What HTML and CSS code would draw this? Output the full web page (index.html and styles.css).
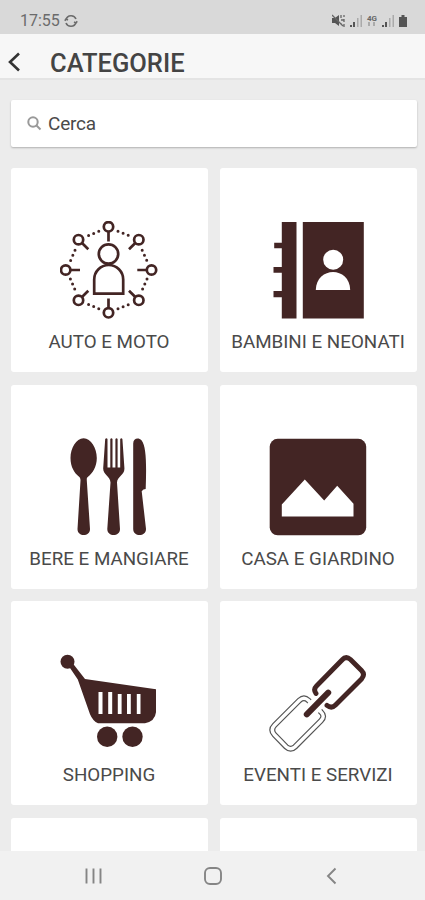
FILE: index.html
```html
<!DOCTYPE html>
<html lang="it">
<head>
<meta charset="utf-8">
<meta name="viewport" content="width=device-width, initial-scale=1">
<title>Categorie</title>
<link rel="stylesheet" href="styles.css">
</head>
<body>
<div class="status">
    <span class="time">17:55</span>
    <svg class="sync" width="14" height="14" viewBox="0 0 14 14"><path d="M2 5.500A5.300 5.300 0 0 1 12 5M12 8.500A5.300 5.300 0 0 1 2 9M0.800 6.700L2 5l2 1M13.200 7.300L12 9l-2-1"/></svg>
    <svg class="signals" width="76" height="14" viewBox="0 0 76 14">
        <path class="on" d="M0 4h3l4-3v11L3 9H0z"/>
        <path class="line" d="M0 1l11 11M9 1v3M12 1v2M9 6h3M12 5v3M9 9v2M12 10v3"/>
        <path class="on" d="M18 11h2v2h-2zM21 8h2v5h-2z"/>
        <path class="off" d="M25 4h1.500v9H25zM28.500 1H30v12h-1.500z"/>
        <text x="35" y="6.500">4G</text>
        <path class="off" d="M36 8h2v4h-2zM41 8h2v4h-2z"/>
        <path class="on" d="M50 11h2v2h-2zM53 8h2v5h-2z"/>
        <path class="off" d="M57 4h1.500v9H57zM60.500 1H62v12h-1.500z"/>
        <path class="on" d="M67 3h2.500V1h3v2H75v10h-8z"/>
    </svg>
</div>

<div class="header">
    <svg class="back" width="13" height="20" viewBox="0 0 13 20"><path d="M11 1.500L2 10l9 8.500"/></svg>
    <h1>CATEGORIE</h1>
</div>

<div class="content">
    <div class="search">
        <svg width="15" height="15" viewBox="0 0 15 15"><circle cx="6" cy="6" r="4.700"/><path d="M9.500 9.500l4 4"/></svg>
        <span>Cerca</span>
    </div>

    <div class="grid">
        <div class="card">
            <svg class="icon line-icon" viewBox="0 0 98 98">
                <path d="M48.500 10.500v10M48.500 87V77.500M10.400 49H20M86.800 49h-9.500M22 22l6.300 6.300M75.300 22L69 28.300M22 76l6.300-6.300M75.300 76L69 69.700"/>
                <circle cx="48.500" cy="5.800" r="4.700"/><circle cx="78.800" cy="18.700" r="4.700"/>
                <circle cx="91.500" cy="49" r="4.700"/><circle cx="78.800" cy="79.300" r="4.700"/>
                <circle cx="48.500" cy="91.800" r="4.700"/><circle cx="18.500" cy="79.300" r="4.700"/>
                <circle cx="5.700" cy="49" r="4.700"/><circle cx="18.500" cy="18.700" r="4.700"/>
                <path class="dots" d="M28.600 14.500l10.400-4.300M58 10.200l10.600 4.300M28.600 83.500l10.400 4.300M58 87.800l10.600-4.300M15 29.300L10.400 40M82.200 29.300L87 40M10.400 58L15 68.800M87 58l-4.700 10.800"/>
                <circle cx="48.500" cy="33" r="9.700"/>
                <path d="M34.200 72.700V58.500a14.500 14.500 0 0 1 29 0v14.200z"/>
            </svg>
            <p>AUTO E MOTO</p>
        </div>
        <div class="card">
            <svg class="icon" viewBox="0 0 98 98">
                <path d="M12.800 1h14.700v96.500H12.800V76.300H4.500V70h8.300V51.700H4.500V46h8.300V27.300H5.200v-5.600h7.600zM33.800 1h61v96.500h-61z"/>
                <circle class="white" cx="64.200" cy="38.700" r="10"/>
                <path class="white" d="M46.800 69c.5-24 34-24 34.400 0z"/>
            </svg>
            <p>BAMBINI E NEONATI</p>
        </div>
        <div class="card">
            <svg class="icon" viewBox="0 0 98 98">
                <path d="M23.600.2C31 .2 36.800 10 36.800 20c0 9-4.500 15.500-8.500 18.500-1.500 1-1.600 2-1.500 4L30 91c0 8-12.500 8-12.500 0l3-48.500c0-2-.4-3-1.700-4C14.500 35 10.500 29 10.500 20c0-10 5.600-19.800 13.100-19.800z"/>
                <path d="M45.200 1q1.300-1.500 2.300 0v28.500h2.800V1q1.200-1.500 2.200 0v28.500h2.900V1q1.200-1.500 2.200 0v28.500h2.600V1q1.200-1.500 2.200 0l2 29c.5 7-7.200 8-7.400 14.500L60 91c0 8-12.700 8-12.700 0l3.200-46.500C50.200 38 42.800 37 43.200 30z"/>
                <path d="M73.200 5.500c0-5 5-6.500 8.300-3.300C86.500 8 86.500 28 85.700 51q-2.500 0-4 2.200L86 91c0 8-12.800 8-12.800 0z"/>
            </svg>
            <p>BERE E MANGIARE</p>
        </div>
        <div class="card">
            <svg class="icon" viewBox="0 0 98 98">
                <rect x=".7" y=".8" width="96.500" height="96.500" rx="8"/>
                <path class="white" d="M12.800 66.500l23-25 19.400 21 13-14.700 16.300 18v12.700H12.800z"/>
            </svg>
            <p>CASA E GIARDINO</p>
        </div>
        <div class="card">
            <svg class="icon" viewBox="0 0 98 98">
                <circle cx="7.500" cy="7.700" r="7"/>
                <path d="M9 12.500l3.500-3.500L25 25l71 10.300v23q-1 9-11 11H38q-5-2-8-9L17.800 25.500z"/>
                <path class="white" d="M38.500 38h4v22h-4zM48.200 38h4v22h-4zM57.800 40h3.800v20h-3.800zM67 40h3.800v20H67zM76.800 40h3.700v20h-3.700z"/>
                <circle cx="47.200" cy="82.700" r="10.200"/><circle cx="72.500" cy="82.700" r="10.200"/>
            </svg>
            <p>SHOPPING</p>
        </div>
        <div class="card">
            <svg class="icon chain" viewBox="0 0 98 98">
                <path class="outer" d="M40.500 47.500l-1.200-1.200q-4.300-4-8.800 0L5.500 71.300q-4.500 4.500 0 9.500l11.700 12q4.500 4 8.800 0l26-26q4.500-4.500 0-8.800l-1-1"/>
                <path class="inner" d="M40.500 47.500l-1.200-1.200q-4.300-4-8.800 0L5.500 71.300q-4.500 4.500 0 9.500l11.700 12q4.500 4 8.800 0l26-26q4.500-4.500 0-8.800l-1-1"/>
                <path class="dark" d="M47 39.500q-3-4 .5-7.500L73 6q4-4.500 8.500-.5L92.500 16.500q4 4 0 8.500L66.500 51q-4 4-8.500.3"/>
                <path class="bar" d="M37.800 60.300l21.400-21.600"/>
            </svg>
            <p>EVENTI E SERVIZI</p>
        </div>
        <div class="card"></div>
        <div class="card"></div>
    </div>
</div>

<div class="navbar">
    <svg width="17" height="18" viewBox="0 0 17 18"><path d="M1.500 1.500v15M8.500 1.500v15M15.500 1.500v15"/></svg>
    <svg class="home" width="18" height="18" viewBox="0 0 18 18"><rect x="1" y="1" width="16" height="16" rx="5"/></svg>
    <svg width="11" height="18" viewBox="0 0 11 18"><path d="M9.500 1.500L2 9l7.500 7.500"/></svg>
</div>
</body>
</html>
```
FILE: styles.css
```css
* {box-sizing:border-box;}
body {margin:0; height:900px; display:flex; flex-direction:column; overflow:hidden; background:#ececec; font-family:Roboto, "Liberation Sans", sans-serif; color:#4a4a4a;}
svg {display:block; flex:none;}

.status {height:34px; flex:none; display:flex; align-items:center; padding:8px 17px 0 20px; background:#d9d9d9; color:#6b6b6b;}
.time {font-size:16px; line-height:18px; width:39px;}
.sync {margin-left:5px; fill:none; stroke:#6b6b6b; stroke-width:1.6;}
.signals {margin-left:auto; font-size:8px; font-weight:bold;}
.signals text {fill:#666;}
.signals .on {fill:#555;}
.signals .off {fill:#aaa;}
.signals .line {fill:none; stroke:#666; stroke-width:1.3;}

.header {height:46px; flex:none; display:flex; align-items:center; padding:11px 9px 0 8px; background:#f7f7f7; border-bottom:2px solid #e4e4e4;}
.back {fill:none; stroke:#333; stroke-width:2.6;}
.header h1 {margin:3px 0 0 29px; font-size:25.5px; line-height:30px; font-weight:500; color:#444;}

.content {flex:1; min-height:0; overflow:hidden; padding:20px 8px 0 11px;}
.search {height:47px; display:flex; align-items:center; padding-left:16px; background:#fff; border-radius:2px; box-shadow:0 1px 2px rgba(0,0,0,.25); font-size:19px; letter-spacing:-.2px;}
.search svg {margin-right:6px; fill:none; stroke:#999; stroke-width:2;}

.grid {display:grid; grid-template-columns:1fr 1fr; grid-auto-rows:204px; gap:12.5px 12px; margin-top:21px;}
.card {display:flex; flex-direction:column; align-items:center; padding:53px 1px 0 0; background:#fff; border-radius:3px;}
.icon {width:98px; height:98px; fill:#432524;}
.card p {margin:12px 0 0; font-size:18.8px; line-height:22px; white-space:nowrap;}
.icon .white {fill:#fff;}
.line-icon {fill:none; stroke:#432524; stroke-width:2.7;}
.line-icon .dots {stroke-width:3; stroke-linecap:round; stroke-dasharray:0 5.5;}
.chain {fill:none; stroke:#432524;}
.chain .outer {stroke:#555; stroke-width:5.8;}
.chain .inner {stroke:#fff; stroke-width:3.4; stroke-linecap:square;}
.chain .dark {stroke-width:4.9; stroke-linecap:round;}
.chain .bar {stroke-width:6; stroke-linecap:round;}

.navbar {height:49px; flex:none; display:flex; justify-content:space-between; align-items:center; padding:1px 88px 0 85px; background:#f1f1f1;}
.navbar svg {fill:none; stroke:#858585; stroke-width:1.9;}
.navbar .home {margin-right:3px;}
```
